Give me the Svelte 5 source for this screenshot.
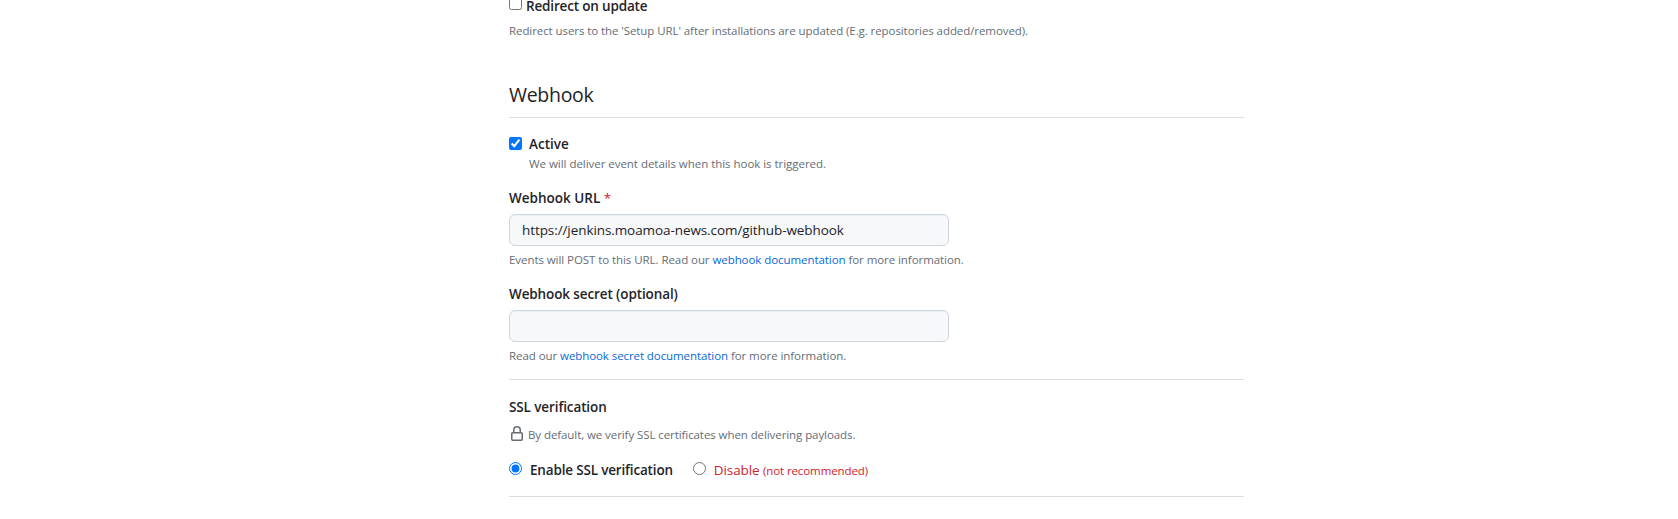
<script>
  let redirectOnUpdate = $state(false);
  let active = $state(true);
  let webhookUrl = $state('https://jenkins.moamoa-news.com/github-webhook');
  let webhookSecret = $state('');
  let ssl = $state('enabled');
</script>

<main>
  <label class="check redirect">
    <input type="checkbox" bind:checked={redirectOnUpdate} />
    <span>Redirect on update</span>
  </label>
  <p class="note redirect-note">Redirect users to the 'Setup URL' after installations are updated (E.g. repositories added/removed).</p>

  <h2>Webhook</h2>

  <label class="check active">
    <input type="checkbox" bind:checked={active} />
    <span>Active</span>
  </label>
  <p class="note active-note">We will deliver event details when this hook is triggered.</p>

  <section class="field">
    <label class="title url-title" for="hook-url">Webhook URL <span class="required">*</span></label>
    <input id="hook-url" class="control" type="text" bind:value={webhookUrl} spellcheck="false" />
    <p class="note">Events will POST to this URL. Read our <a href="#docs">webhook documentation</a> for more information.</p>
  </section>

  <section class="field secret">
    <label class="title" for="hook-secret">Webhook secret (optional)</label>
    <input id="hook-secret" class="control" type="text" bind:value={webhookSecret} />
    <p class="note secret-note">Read our <a href="#secret-docs">webhook secret documentation</a> for more information.</p>
  </section>

  <section class="ssl">
    <h3 class="title">SSL verification</h3>
    <p class="note lock-note">
      <svg width="16" height="16" viewBox="0 0 16 16" aria-hidden="true">
        <path d="M4 4a4 4 0 0 1 8 0v2h.25c.966 0 1.75.784 1.75 1.75v5.5A1.75 1.75 0 0 1 12.25 15h-8.5A1.75 1.75 0 0 1 2 13.25v-5.5C2 6.784 2.784 6 3.75 6H4Zm8.25 3.5h-8.5a.25.25 0 0 0-.25.25v5.5c0 .138.112.25.25.25h8.5a.25.25 0 0 0 .25-.25v-5.5a.25.25 0 0 0-.25-.25ZM10.5 6V4a2.5 2.5 0 1 0-5 0v2Z" />
      </svg>
      <span>By default, we verify SSL certificates when delivering payloads.</span>
    </p>
    <div class="options">
      <label class="option enable">
        <input type="radio" name="ssl" value="enabled" bind:group={ssl} />
        <span>Enable SSL verification</span>
      </label>
      <label class="option danger">
        <input type="radio" name="ssl" value="disabled" bind:group={ssl} />
        <span>Disable <small>(not recommended)</small></span>
      </label>
    </div>
  </section>
</main>

<style>
  :global(body) {
    background: #fff;
    overflow: hidden;
  }
  main {
    box-sizing: border-box;
    width: 735px;
    height: 519px;
    margin-left: 509px;
    color: #1f2328;
    font: 13.5px/20px "Open Sans", "Noto Sans", sans-serif;
    display: flow-root;
  }
  input[type='checkbox'],
  input[type='radio'] {
    width: 13px;
    height: 13px;
    margin: 0;
    flex: none;
  }
  p, h2, h3 {
    margin: 0;
  }
  .check {
    display: flex;
    height: 20px;
    font-weight: 600;
  }
  .redirect {
    height: 19px;
    margin-top: -4px;
    gap: 4px;
    letter-spacing: -0.17px;
  }
  .redirect input {
    margin-top: 1px;
  }
  .note {
    height: 18px;
    color: #656d76;
    font-size: 11.5px;
    line-height: 18px;
    letter-spacing: -0.065px;
    white-space: nowrap;
  }
  .redirect-note {
    margin-top: 7px;
    letter-spacing: -0.078px;
  }
  h2 {
    height: 30px;
    margin-top: 40px;
    padding-bottom: 7px;
    border-bottom: 1px solid #d8dee4;
    font-size: 19.5px;
    font-weight: 400;
    line-height: 30px;
    letter-spacing: -0.3px;
  }
  .active {
    margin-top: 16px;
    gap: 7px;
  }
  .active input {
    margin-top: 3px;
  }
  .active-note {
    margin: 1px 0 0 20px;
    letter-spacing: -0.035px;
  }
  .field {
    margin-top: 15px;
  }
  .title {
    display: block;
    height: 20px;
    font-size: 13.5px;
    font-weight: 600;
    line-height: 20px;
    letter-spacing: -0.11px;
  }
  .url-title {
    letter-spacing: 0;
  }
  .required {
    color: #cf222e;
    font-weight: 400;
  }
  .control {
    display: block;
    box-sizing: border-box;
    width: 440px;
    height: 32px;
    margin: 6px 0 5px;
    padding: 5px 12px;
    border: 1px solid #d0d7de;
    border-radius: 6px;
    background: #f6f8fa;
    box-shadow: inset 0 1px 0 rgba(208, 215, 222, 0.2);
    color: #1f2328;
    font: inherit;
    letter-spacing: -0.085px;
    outline: none;
  }
  a {
    color: #0969da;
    text-decoration: none;
  }
  .secret-note a {
    letter-spacing: -0.08px;
  }
  .ssl {
    height: 99px;
    margin-top: 14px;
    padding-top: 17px;
    border-top: 1px solid #d8dee4;
    border-bottom: 1px solid #d8dee4;
  }
  .lock-note {
    display: flex;
    gap: 3px;
    margin-top: 9px;
    letter-spacing: -0.08px;
  }
  svg {
    flex: none;
    fill: currentColor;
  }
  .options {
    display: flex;
    gap: 20px;
    margin-top: 16px;
  }
  .option {
    display: flex;
    gap: 8px;
    height: 20px;
    white-space: nowrap;
  }
  .option input {
    margin-top: 2px;
  }
  .enable {
    font-weight: 600;
    letter-spacing: -0.17px;
  }
  .danger {
    color: #cf222e;
    letter-spacing: -0.1px;
  }
  small {
    font-size: 11.5px;
    letter-spacing: -0.1px;
  }
</style>
